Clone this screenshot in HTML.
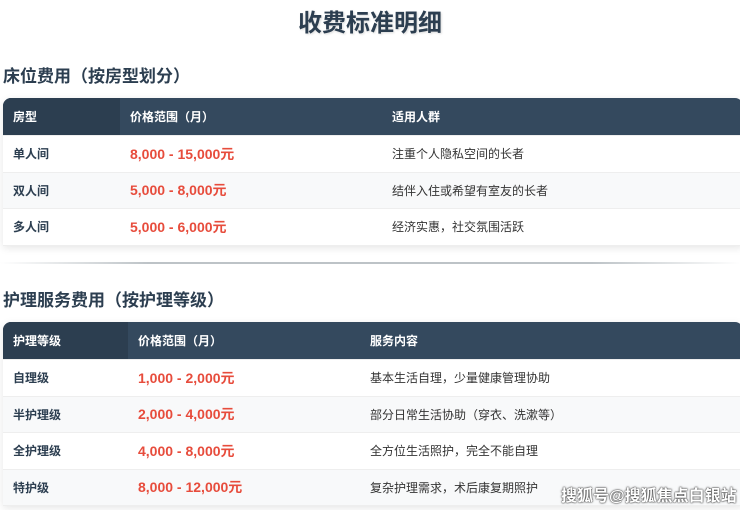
<!DOCTYPE html>
<html><head><meta charset="utf-8"><style>
*{margin:0;padding:0;box-sizing:border-box}
body{width:740px;height:510px;overflow:hidden;background:#fff;font-family:"Liberation Sans","Noto Sans CJK SC",sans-serif;color:#2c3e50;position:relative}
h1{position:absolute;top:3px;left:0;width:740px;text-align:center;font-size:24px;font-weight:bold;color:#2c3e50;text-shadow:1px 1px 2px rgba(0,0,0,.15)}
h2{position:absolute;left:3px;font-size:17px;font-weight:bold;color:#2c3e50}
.t{position:absolute;left:3px;width:740px;border-radius:8px 8px 0 0;overflow:hidden;box-shadow:0 2px 8px rgba(0,0,0,.1)}
.r{display:flex;height:36.5px;align-items:center;font-size:12px;color:#333;border-bottom:1px solid #eee}
.r>div{height:100%;display:flex;align-items:center;padding-left:10px}
.r>div:first-child{font-weight:bold;color:#2c3e50}
.h{height:38px;background:#34495e!important;color:#fff;font-weight:bold;font-size:12px}
.h>div:first-child{background:#2c3e50;color:#fff}
.p{color:#e74c3c;font-weight:bold;font-size:14px}
.hr{position:absolute;left:0;top:262px;width:740px;height:2px;background:linear-gradient(90deg,#fff,#bdc3c7 20%,#bdc3c7 80%,#fff)}
.wm{position:absolute;left:561px;top:482px;font-size:16px;font-weight:bold;color:#fff;text-shadow:0 0 2px #333,0 0 1px #000}
</style></head><body>
<h1>收费标准明细</h1>
<h2 style="top:62px">床位费用（按房型划分）</h2>
<div class="t" style="top:98px">
<div class="r h"><div style="width:117px">房型</div><div style="width:262px">价格范围（月）</div><div>适用人群</div></div>
<div class="r" style="background:#fff"><div style="width:117px">单人间</div><div style="width:262px" class="p">8,000 - 15,000元</div><div>注重个人隐私空间的长者</div></div>
<div class="r" style="background:#f8f9fa"><div style="width:117px">双人间</div><div style="width:262px" class="p">5,000 - 8,000元</div><div>结伴入住或希望有室友的长者</div></div>
<div class="r" style="background:#fff"><div style="width:117px">多人间</div><div style="width:262px" class="p">5,000 - 6,000元</div><div>经济实惠，社交氛围活跃</div></div>
</div>
<div class="hr"></div>
<h2 style="top:286px">护理服务费用（按护理等级）</h2>
<div class="t" style="top:322px">
<div class="r h"><div style="width:125px">护理等级</div><div style="width:232px">价格范围（月）</div><div>服务内容</div></div>
<div class="r" style="background:#fff"><div style="width:125px">自理级</div><div style="width:232px" class="p">1,000 - 2,000元</div><div>基本生活自理，少量健康管理协助</div></div>
<div class="r" style="background:#f8f9fa"><div style="width:125px">半护理级</div><div style="width:232px" class="p">2,000 - 4,000元</div><div>部分日常生活协助（穿衣、洗漱等）</div></div>
<div class="r" style="background:#fff"><div style="width:125px">全护理级</div><div style="width:232px" class="p">4,000 - 8,000元</div><div>全方位生活照护，完全不能自理</div></div>
<div class="r" style="background:#f8f9fa"><div style="width:125px">特护级</div><div style="width:232px" class="p">8,000 - 12,000元</div><div>复杂护理需求，术后康复期照护</div></div>
</div>
<div class="wm">搜狐号@搜狐焦点白银站</div>
</body></html>
